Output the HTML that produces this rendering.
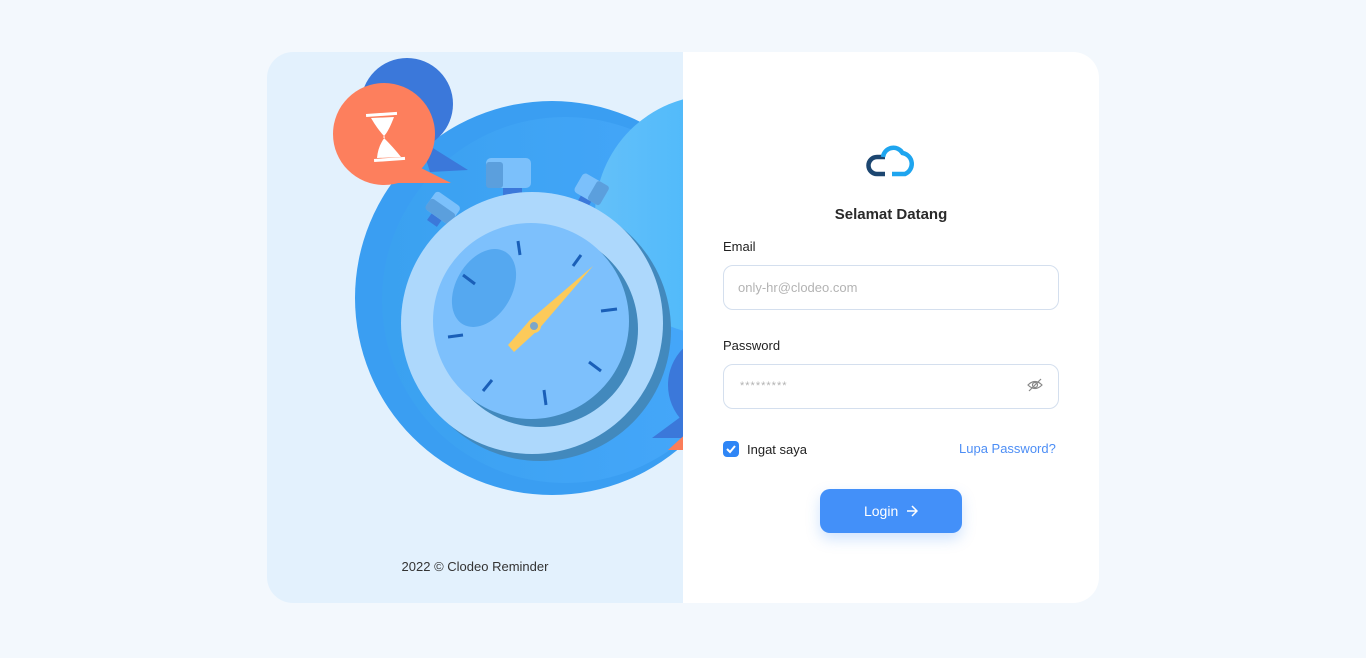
<!DOCTYPE html>
<html><head><meta charset="utf-8"><style>
*{margin:0;padding:0;box-sizing:border-box}
body{width:1366px;height:658px;background:#f3f8fd;font-family:"Liberation Sans",sans-serif;position:relative;overflow:hidden}
.left{position:absolute;left:267px;top:52px;width:416px;height:551px;background:#e3f1fd;border-radius:26px 0 0 26px;overflow:hidden}
.right{position:absolute;left:683px;top:52px;width:416px;height:551px;background:#fff;border-radius:0 26px 26px 0}
.abs{position:absolute}
.lbl{position:absolute;left:40px;font-size:13px;color:#222}
.inp{position:absolute;left:40px;width:336px;height:45px;border:1px solid #d4dfee;border-radius:10px;font-size:13px;color:#b3b3b3;padding-left:14px;line-height:43px}
</style></head><body>
<div class="left">
<svg width="416" height="551" viewBox="267 52 416 551" style="position:absolute;left:0;top:0">
<defs>
<linearGradient id="g1" x1="0" x2="1"><stop offset="0" stop-color="#64c0f9"/><stop offset="1" stop-color="#33b1fc"/></linearGradient>
<linearGradient id="g2" x1="0" x2="1"><stop offset="0" stop-color="#3aa1f0"/><stop offset="1" stop-color="#46a7fb"/></linearGradient>
</defs>
<circle cx="552" cy="298" r="197" fill="#3a9ef2"/>
<circle cx="565" cy="300" r="183" fill="url(#g2)"/>
<circle cx="715" cy="215" r="120" fill="url(#g1)"/>
<circle cx="720" cy="385" r="52" fill="#3b78da"/>
<path d="M652 438 L690 410 L690 438Z" fill="#3b78da"/>
<path d="M668 450 L690 430 L690 450Z" fill="#fb7d59"/>
<circle cx="407" cy="104" r="46" fill="#3b78da"/>
<path d="M420 140 L468 170 L430 172Z" fill="#3b78da"/>
<circle cx="384" cy="134" r="51" fill="#fd7f5d"/>
<path d="M405 160 L451 183 L395 183Z" fill="#fd7f5d"/>
<rect x="366" y="113" width="31" height="3" fill="#fff" transform="rotate(-4 381 114)"/>
<rect x="374" y="158" width="31" height="3" fill="#fff" transform="rotate(-4 389 159)"/>
<path d="M371 118 L394 117 Q388 133 383 137 Q394 148 401 157 L377 158 Q378 146 385 137 Q378 130 371 118Z" fill="#fff"/>
<rect x="503" y="183" width="19" height="14" fill="#3b78da"/>
<rect x="486" y="158" width="45" height="30" rx="5" fill="#7bc0fb"/>
<rect x="486" y="162" width="17" height="26" rx="3" fill="#5b9fdd"/>
<g transform="rotate(35 440 212)"><rect x="434" y="212" width="12" height="14" fill="#3b78da"/><rect x="425" y="196" width="30" height="22" rx="4" fill="#7bc0fb"/><rect x="425" y="205" width="30" height="13" rx="3" fill="#5b9fdd"/></g>
<g transform="rotate(30 591 190)"><rect x="585" y="195" width="12" height="14" fill="#3b78da"/><rect x="576" y="178" width="30" height="22" rx="4" fill="#7bc0fb"/><rect x="592" y="178" width="14" height="22" rx="3" fill="#5b9fdd"/></g>
<circle cx="540" cy="330" r="131" fill="#4289bd"/>
<circle cx="532" cy="323" r="131" fill="#add8fc"/>
<circle cx="540" cy="329" r="98" fill="#4289bd"/>
<circle cx="531" cy="321" r="98" fill="#7dc0fc"/>
<ellipse cx="484" cy="288" rx="28" ry="42" fill="#55a8f0" transform="rotate(30 484 288)"/>
<g stroke="#1a5fb8" stroke-width="3">
<line x1="518" y1="241" x2="520" y2="255"/><line x1="581" y1="255" x2="573" y2="266"/><line x1="601" y1="311" x2="617" y2="309"/><line x1="589" y1="362" x2="601" y2="371"/><line x1="544" y1="390" x2="546" y2="405"/><line x1="492" y1="380" x2="483" y2="391"/><line x1="448" y1="337" x2="463" y2="335"/><line x1="463" y1="275" x2="475" y2="284"/>
</g>
<path d="M593 266 L538 330 L514 352 L508 345 L530 320Z" fill="#fcca5a"/>
<circle cx="534" cy="326" r="7" fill="#fcca5a"/><circle cx="534" cy="326" r="4" fill="#7da6c8"/>
</svg>
<div class="abs" style="left:0;width:416px;top:507px;text-align:center;font-size:13px;color:#333">2022 © Clodeo Reminder</div>
</div>
<div class="right">
<svg class="abs" style="left:180px;top:90px" width="56" height="40" viewBox="0 0 56 40">
<path d="M22 15 H14 A8.5 8.5 0 0 0 14 32 H22" fill="none" stroke="#1c4670" stroke-width="4.5"/>
<path d="M20 15 A10.5 10.5 0 0 1 39.5 11 A11 11 0 0 1 42 32 H29" fill="none" stroke="#1ea5ef" stroke-width="4.5"/>
</svg>
<div class="abs" style="left:0;width:416px;top:154px;text-align:center;font-size:15px;font-weight:bold;color:#2a2a2a">Selamat Datang</div>
<div class="lbl" style="top:187px">Email</div>
<div class="inp" style="top:213px">only-hr@clodeo.com</div>
<div class="lbl" style="top:286px">Password</div>
<div class="inp" style="top:312px;font-size:11px;letter-spacing:1px;padding-left:16px">*********</div>
<svg class="abs" style="left:344px;top:326px" width="16" height="14" viewBox="0 0 16 14"><path d="M1 7 Q8 0 15 7 Q8 14 1 7Z" fill="none" stroke="#888" stroke-width="1.2"/><circle cx="8" cy="7" r="2.5" fill="none" stroke="#888" stroke-width="1.2"/><line x1="2" y1="13" x2="14" y2="1" stroke="#888" stroke-width="1.2"/></svg>
<div class="abs" style="left:40px;top:389px;width:16px;height:16px;background:#2f86f6;border-radius:4px"><svg width="16" height="16"><path d="M4 8 L7 11 L12 5" fill="none" stroke="#fff" stroke-width="2"/></svg></div>
<div class="abs" style="left:64px;top:390px;font-size:13px;color:#222">Ingat saya</div>
<div class="abs" style="left:276px;top:389px;font-size:13px;color:#4d8ef5">Lupa Password?</div>
<div class="abs" style="left:137px;top:437px;width:142px;height:44px;background:#4390f9;border-radius:10px;box-shadow:0 6px 14px rgba(67,144,249,.25);color:#fff;font-size:14px;line-height:44px;text-align:center">Login &nbsp;<svg width="12" height="12" viewBox="0 0 12 12" style="vertical-align:-1px"><path d="M1 6 H11 M6 1 L11 6 L6 11" fill="none" stroke="#fff" stroke-width="1.5"/></svg></div>
</div>
</body></html>
